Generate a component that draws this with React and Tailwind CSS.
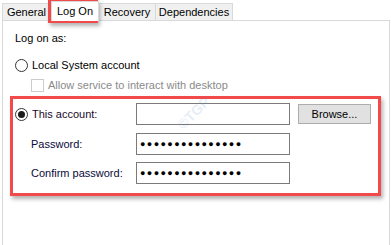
import React from "react";

const font = { fontFamily: '"Liberation Sans", Arial, sans-serif' };

function Radio({ checked }) {
  return (
    <span className="flex h-[13px] w-[13px] shrink-0 items-center justify-center rounded-full border border-[#333333] bg-white">
      {checked && <span className="h-[7px] w-[7px] rounded-full bg-[#1a1a1a]" />}
    </span>
  );
}

const dots = "●●●●●●●●●●●●●●●";

export default function App() {
  return (
    <div className="relative h-[245px] w-[391px] overflow-hidden bg-white text-[11px] leading-[14px] text-black" style={font}>
      {/* tabs */}
      <div className="flex h-[20px] items-end pl-[2px]">
        <div className="flex h-[17px] w-[49px] items-center justify-center border border-b-0 border-[#d9d9d9] bg-[#f0f0f0]">General</div>
        <div className="relative z-10 -mb-[1px] flex h-[20px] w-[48px] items-center justify-center border border-b-0 border-[#d9d9d9] bg-white pb-[2px]">Log On</div>
        <div className="flex h-[17px] w-[57px] items-center justify-center border border-b-0 border-l-0 border-[#d9d9d9] bg-[#f0f0f0]">Recovery</div>
        <div className="flex h-[17px] w-[77px] items-center justify-center border border-b-0 border-l-0 border-[#d9d9d9] bg-[#f0f0f0]">Dependencies</div>
      </div>
      <div className="pointer-events-none absolute left-[48px] top-0 h-[23px] w-[50px] border-[3px] border-[#f24a4a] shadow-[2px_3px_4px_rgba(0,0,0,0.3)]" />

      {/* panel */}
      <div className="ml-[2px] h-[225px] w-[388px] border border-b-0 border-[#d9d9d9]">
        <div className="mt-[10px] pl-[12px]">Log on as:</div>
        <div className="mt-[12px] flex h-[16px] items-center pl-[12px]">
          <Radio />
          <span className="ml-[4px]">Local System account</span>
        </div>
        <div className="mt-[4px] flex h-[16px] items-center pl-[28px]">
          <span className="h-[13px] w-[13px] border border-[#cccccc] bg-white" />
          <span className="ml-[4px] text-[#8a8a8a]">Allow service to interact with desktop</span>
        </div>

        <div className="ml-[7px] mt-[3px] h-[100px] w-[371px] border-[3px] border-[#f24a4a] pt-[4px] shadow-[2px_3px_4px_rgba(0,0,0,0.3)]">
          <div className="flex h-[22px] items-center">
            <div className="flex w-[123px] items-center pl-[2px]">
              <Radio checked />
              <span className="ml-[4px] text-[#1a0a2a]">This account:</span>
            </div>
            <div className="h-[22px] w-[154px] border border-[#7a7a7a] bg-white" />
            <div className="ml-[8px] flex h-[20px] w-[73px] items-center justify-center border border-[#adadad] bg-[#e1e1e1]">Browse...</div>
          </div>
          <div className="mt-[8px] flex h-[22px] items-center">
            <div className="w-[123px] pl-[18px] text-[#0a0a3a]">Password:</div>
            <div className="flex h-[22px] w-[154px] items-center border border-[#7a7a7a] bg-white pl-[3px] text-[9px] tracking-[1.4px]">{dots}</div>
          </div>
          <div className="mt-[7px] flex h-[22px] items-center">
            <div className="w-[123px] pl-[18px] text-[#0a0a3a]">Confirm password:</div>
            <div className="flex h-[22px] w-[154px] items-center border border-[#7a7a7a] bg-white pl-[3px] text-[9px] tracking-[1.4px]">{dots}</div>
          </div>
        </div>
      </div>

      {/* watermark */}
      <div className="pointer-events-none absolute left-[174px] top-[106px] -rotate-45 text-[14px] font-bold text-[#5b8fd0] opacity-15">©TGP</div>
    </div>
  );
}
